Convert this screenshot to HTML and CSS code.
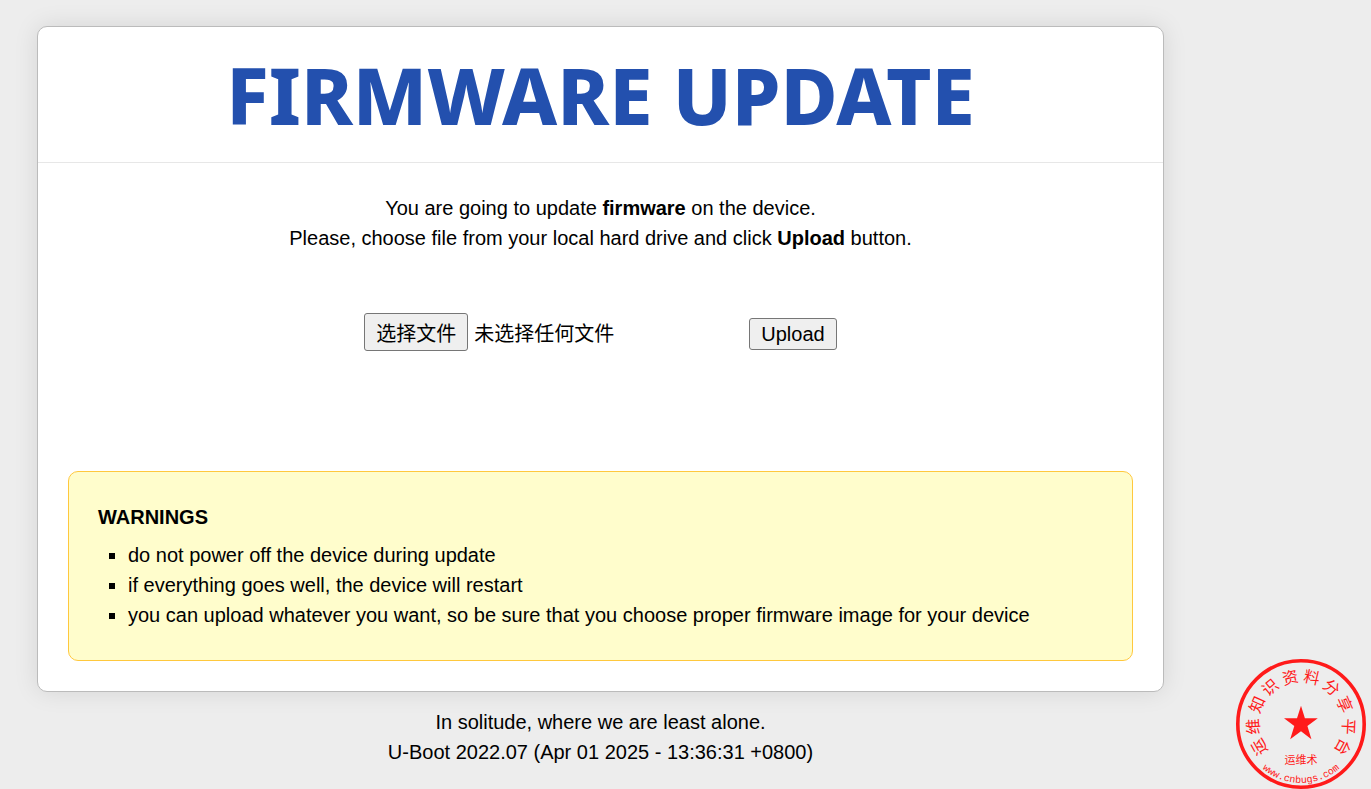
FILE: index.html
```html
<!DOCTYPE html>
<html lang="en">
<head>
    <meta charset="UTF-8">
    <meta name="viewport" content="width=device-width, initial-scale=1.0">
    <title>Firmware update</title>
    <link rel="stylesheet" href="styles.css">
</head>
<body>
    <main class="box">
        <h1>FIRMWARE UPDATE</h1>
        <div class="content">
            <p class="hint">You are going to update <strong>firmware</strong> on the device.<br>Please, choose file from your local hard drive and click <strong>Upload</strong> button.</p>
            <form class="upload-form" method="post" enctype="multipart/form-data">
                <label class="file-field" for="firmware" lang="zh-CN">
                    <input type="file" id="firmware" name="firmware" class="file-input">
                    <span class="file-button">选择文件</span>
                    <span id="fileName">未选择任何文件</span>
                </label>
                <button type="submit" class="upload-button">Upload</button>
            </form>
            <div class="warnings">
                <strong>WARNINGS</strong>
                <ul>
                    <li>do not power off the device during update</li>
                    <li>if everything goes well, the device will restart</li>
                    <li>you can upload whatever you want, so be sure that you choose proper firmware image for your device</li>
                </ul>
            </div>
        </div>
    </main>
    <footer class="footer">
        In solitude, where we are least alone.<br>
        U-Boot 2022.07 (Apr 01 2025 - 13:36:31 +0800)
    </footer>

    <svg class="stamp" viewBox="0 0 130 130" lang="zh-CN" role="img" aria-label="运维知识资料分享平台">
        <defs>
            <path id="stampArc" d="M6 65 A59 59 0 0 0 124 65"/>
        </defs>
        <circle class="stamp-ring" cx="65" cy="65" r="63.2"/>
        <path d="M65 46.8 L68.9 59.3 L81.8 59.3 L71.4 66.9 L75.4 80.2 L65 72.3 L54.2 80.2 L58.3 66.9 L48 59.3 L61 59.3 Z"/>
        <g class="stamp-ring-text">
            <text x="65" y="23" transform="rotate(-119 65 65)">运</text>
            <text x="65" y="23" transform="rotate(-93 65 65)">维</text>
            <text x="65" y="23" transform="rotate(-66 65 65)">知</text>
            <text x="65" y="23" transform="rotate(-40 65 65)">识</text>
            <text x="65" y="23" transform="rotate(-13 65 65)">资</text>
            <text x="65" y="23" transform="rotate(13 65 65)">料</text>
            <text x="65" y="23" transform="rotate(40 65 65)">分</text>
            <text x="65" y="23" transform="rotate(66 65 65)">享</text>
            <text x="65" y="23" transform="rotate(93 65 65)">平</text>
            <text x="65" y="23" transform="rotate(119 65 65)">台</text>
        </g>
        <text class="stamp-name" x="65" y="105">运维术</text>
        <text class="stamp-url"><textPath href="#stampArc" startOffset="50%">www.cnbugs.com</textPath></text>
    </svg>

    <script>
        const fileInput = document.getElementById('firmware');
        const fileName = document.getElementById('fileName');

        fileInput.addEventListener('change', () => {
            fileName.textContent = fileInput.files.length ? fileInput.files[0].name : '未选择任何文件';
        });
    </script>
</body>
</html>
```
FILE: styles.css
```css
* {
    box-sizing: border-box;
}
body {
    margin: 0;
    padding: 26px 207px 15px 37px;
    min-height: 100vh;
    position: relative;
    background-color: #ededed;
    color: #000;
    font-family: 'Liberation Sans', Arial, 'Noto Sans CJK SC', sans-serif;
    font-size: 20px;
    line-height: 30px;
}
.box {
    background-color: #fff;
    border: 1px solid #bbb;
    border-radius: 10px;
    box-shadow: 0 0 24px rgba(0, 0, 0, 0.1);
}
h1 {
    margin: 0;
    padding: 23px 30px 22px;
    border-bottom: 1px solid #e7e7e7;
    color: #2350ae;
    font-family: 'Noto Sans', sans-serif;
    font-size: 78px;
    font-weight: 800;
    line-height: 90px;
    text-align: center;
}
.content {
    padding: 30px;
}
.hint {
    margin: 0;
    text-align: center;
}
.upload-form {
    display: flex;
    justify-content: center;
    align-items: baseline;
    gap: 10px;
    margin: 60px 0 120px;
}
.file-field {
    position: relative;
    display: flex;
    align-items: baseline;
    gap: 6px;
    width: 375px;
}
.file-input {
    position: absolute;
    inset: 0;
    width: 100%;
    opacity: 0;
    cursor: pointer;
}
.file-button,
.upload-button {
    border: 1px solid #767676;
    border-radius: 3px;
    background-color: #efefef;
    color: #000;
}
.file-button {
    padding: 5px 11px 1px;
}
.upload-button {
    padding: 0 11px;
    font: inherit;
}
.warnings {
    padding: 30px 29px;
    border: 1px solid #ffc83d;
    border-radius: 10px;
    background-color: #fffdcc;
}
.warnings ul {
    margin: 8px 0 0;
    padding-left: 30px;
    list-style-type: square;
}
.footer {
    margin-top: 15px;
    text-align: center;
}
.stamp {
    position: absolute;
    right: 5px;
    bottom: 0;
    width: 130px;
    height: 130px;
    fill: #ff1a1a;
    font-family: 'Noto Sans CJK SC', sans-serif;
    text-anchor: middle;
}
.stamp-ring {
    fill: none;
    stroke: #ff1a1a;
    stroke-width: 3.6;
}
.stamp-ring-text {
    font-size: 16px;
}
.stamp-name {
    font-size: 11px;
}
.stamp-url {
    font-family: 'Liberation Mono', monospace;
    font-size: 10px;
}
```
